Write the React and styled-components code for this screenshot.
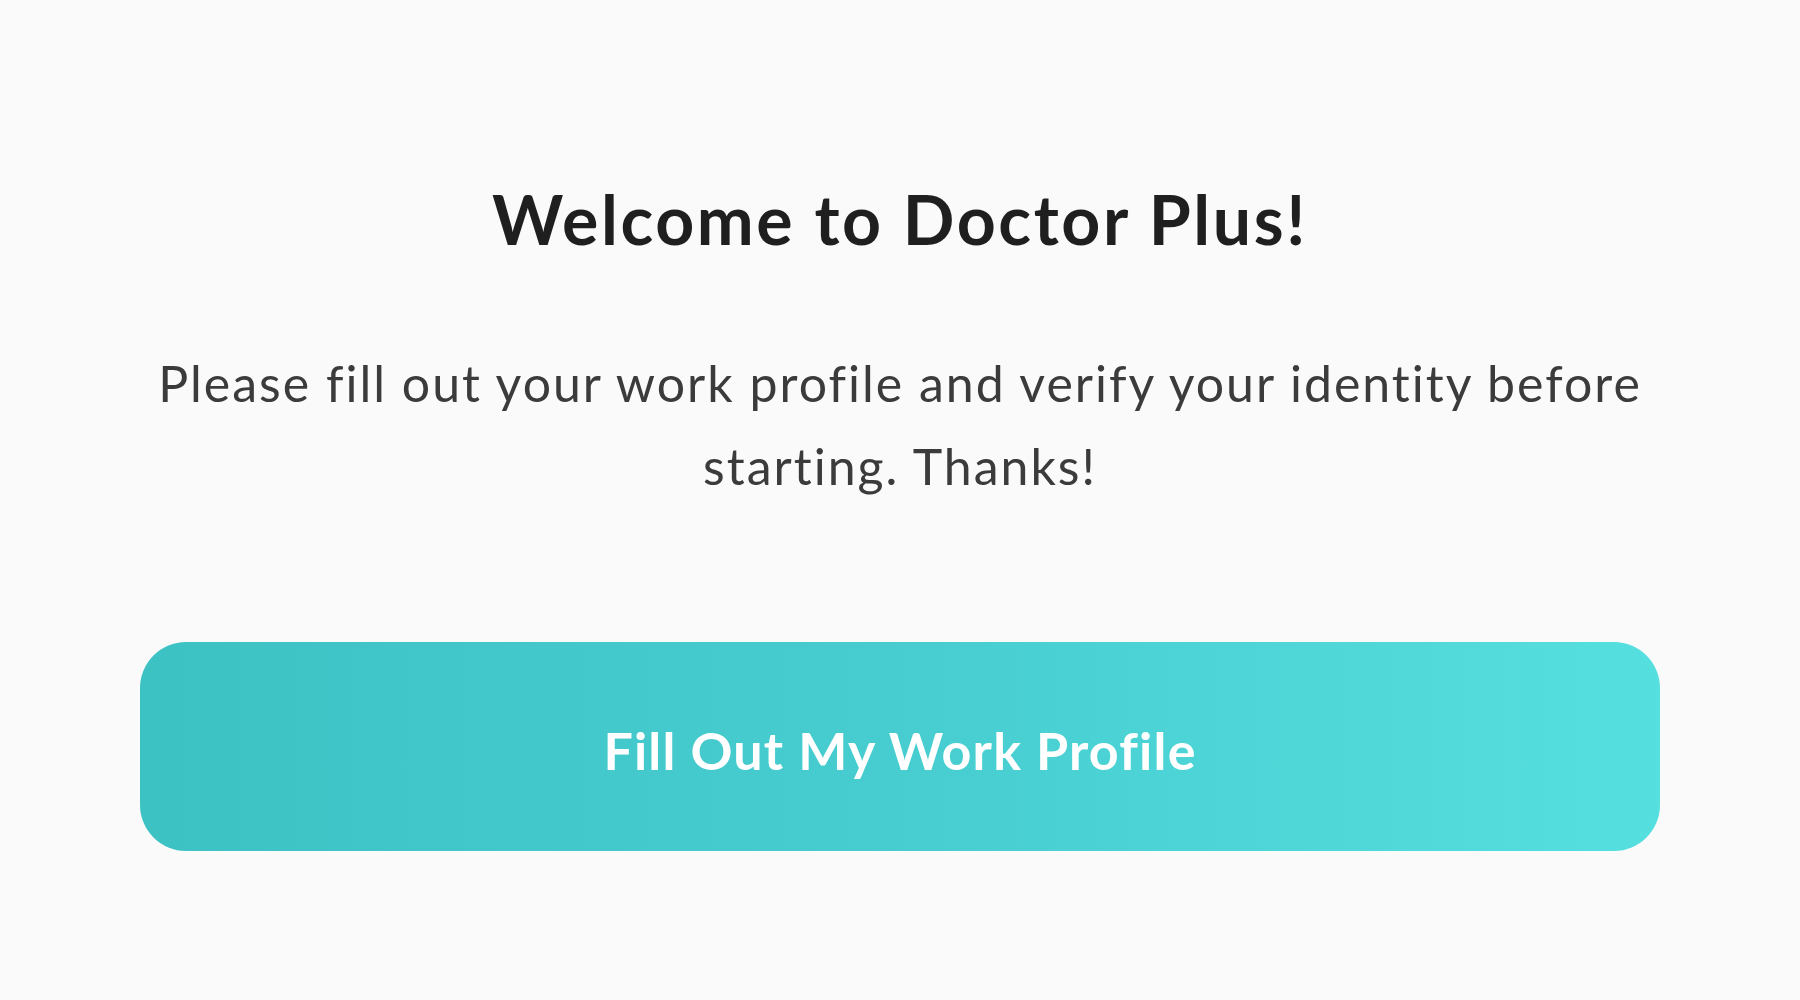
import React from "react";
import styled, { createGlobalStyle } from "styled-components";

const GlobalStyle = createGlobalStyle`
  html, body {
    margin: 0;
    padding: 0;
    background: #fafafa;
  }
  body {
    font-family: Lato, "Noto Sans", sans-serif;
  }
`;

const Page = styled.main`
  display: flex;
  flex-direction: column;
  align-items: center;
  min-height: 1000px;
  box-sizing: border-box;
  padding: 178px 140px 0;
`;

const Title = styled.h1`
  margin: 0;
  font-size: 68px;
  line-height: 1.2;
  font-weight: 700;
  letter-spacing: 2.6px;
  color: #1f1f1f;
  text-align: center;
`;

const Intro = styled.p`
  margin: 82px 0 0;
  font-size: 50px;
  line-height: 83px;
  font-weight: 400;
  letter-spacing: 2px;
  color: #3b3b3b;
  text-align: center;
`;

const PrimaryButton = styled.button`
  display: flex;
  align-items: center;
  justify-content: center;
  width: 100%;
  height: 209px;
  margin-top: 134px;
  padding: 8px 0 0;
  border: none;
  border-radius: 46px;
  background: linear-gradient(90deg, #3dc2c4 0%, #47cdd0 50%, #56dfdf 100%);
  color: #ffffff;
  font-family: inherit;
  font-size: 52px;
  font-weight: 700;
  line-height: 1.2;
  letter-spacing: 1.2px;
  cursor: pointer;
`;

function App() {
  return (
    <>
      <GlobalStyle />
      <Page>
        <Title>Welcome to Doctor Plus!</Title>
        <Intro>
          Please fill out your work profile and verify your identity before
          starting. Thanks!
        </Intro>
        <PrimaryButton>Fill Out My Work Profile</PrimaryButton>
      </Page>
    </>
  );
}

export default App;
